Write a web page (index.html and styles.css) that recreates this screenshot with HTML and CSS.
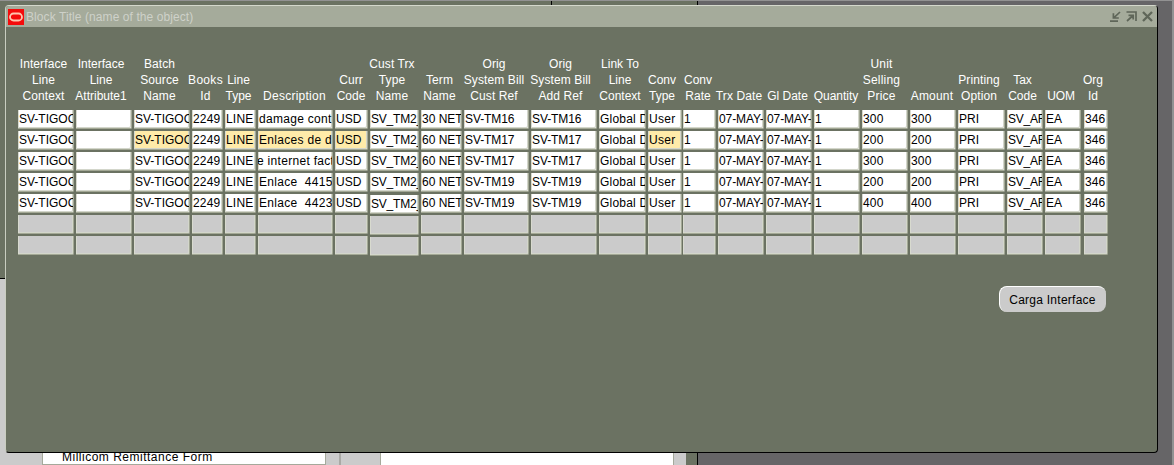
FILE: index.html
```html
<!DOCTYPE html>
<html lang="en">
<head>
<meta charset="utf-8">
<title>Block Title</title>
<link rel="stylesheet" href="styles.css">
</head>
<body>
<div class="desktop">
  <div class="parent-window"></div>
  <div class="parent-tick"></div>
  <div class="parent-body">
    <div class="list-item">Millicom Remittance Form</div>
    <div class="list-rule"></div>
    <div class="list-item blank"></div>
  </div>
  <main class="window">
    <header class="titlebar">
      <svg class="logo" width="16" height="16" viewBox="0 0 16 16"><rect width="16" height="16" fill="#f40b0b"/><rect x="2" y="4.500" width="12" height="7" rx="3.500" fill="none" stroke="#ffc4ae" stroke-width="1.800"/></svg>
      <span class="title">Block Title (name of the object)</span>
      <svg class="controls" width="44" height="12" viewBox="0 0 44 12" fill="none" stroke="#5f6659" stroke-width="1.700">
        <path d="M0 10.200H8M10 1L4 6.600M3.400 2.200V7H8.800"/>
        <path d="M16.500 1H26V10M17 10L23 4.500M18.500 4.300H23.200V8.500"/>
        <path d="M33 1L42 10M42 1L33 10" stroke-width="2.300"/>
      </svg>
    </header>
    <section class="grid" id="grid"></section>
    <div class="actions"><button class="button">Carga Interface</button></div>
  </main>
</div>
<script src="grid.js"></script>
</body>
</html>
```
FILE: styles.css
```css
* { box-sizing: border-box; }
body { margin: 0; font: 12px/16px "Liberation Sans", Arial, sans-serif; color: #000; }
.desktop { position: relative; width: 1174px; height: 465px; overflow: hidden; background: #666567; border-top: 1px solid #929292; border-right: 2px solid #929292; }
.parent-window { position: absolute; left: 0; top: 0; width: 698px; height: 465px; background: #6b7262; border-right: 1px solid #000; }
.parent-tick { position: absolute; left: 551px; top: 0; width: 1px; height: 5px; background: #000; }
.parent-body { position: absolute; left: 0; top: 277px; width: 686px; height: 188px; padding: 172px 0 0 42px; background: #cbcbcb; border-top: 1px solid #000; display: flex; }
.list-item { width: 284px; height: 14px; padding-left: 19px; line-height: 13px; background: #fff; border: solid #a5a99b; border-width: 0 1px 1px; letter-spacing: .5px; white-space: nowrap; }
.list-rule { width: 2px; height: 16px; margin: 0 39px 0 13px; background: #a9a9a5; }
.list-item.blank { width: 294px; height: 16px; padding: 0; }
.window { position: absolute; left: 5px; top: 4px; width: 1153px; height: 448px; background: #6b7262; border: 1px solid #000; border-top-color: #d4d8cc; border-left-color: #c9cdc0; border-radius: 4px; overflow: hidden; }
.titlebar { display: flex; height: 21px; padding: 3px 4px 0 2px; background: #a5ab9b; }
.logo { display: block; flex: none; }
.title { flex: 1; padding-left: 2px; color: #ced1c9; letter-spacing: .08px; line-height: 16px; }
.controls { margin-top: 2px; margin-right: -1px; }
.grid { display: flex; width: max-content; margin-left: 12px; padding-top: 28px; }
.column { display: flex; flex-direction: column; gap: 2px; }
.heading { height: 53px; display: flex; flex-direction: column; justify-content: flex-end; align-items: center; padding-bottom: 4px; color: #fff; white-space: pre; text-align: center; }
.field { height: 19px; padding-left: 1px; line-height: 18px; white-space: pre; overflow: hidden; background: #fff; border: solid #a3a895; border-width: 0 1px 1px 0; box-shadow: inset 1px 0 #d8dacf, inset -1px -1px #d3d6cb; border-radius: 0 0 2px 0; }
.field.current { background: #ffeba9; }
.field.empty { background: #cbcbcb; }
.field.scrolled { padding-left: 0; text-indent: -1px; }
.column.lowered .field:nth-child(n+6) { position: relative; top: 1px; }
.actions { display: flex; justify-content: flex-end; padding: 31px 51px 0 0; }
.button { width: 107px; height: 26px; padding: 0 1px 0 0; font: inherit; letter-spacing: .25px; background: #cbcbcb; border: solid #fff; border-width: 1px 0 0 1px; border-radius: 8px; }
```
FILE: grid.js
```js
// Each column: left edge, right edge, heading centre, heading, cell values,
// letter spacing of the cells, letter spacing of the heading.
const same = v => [v, v, v, v, v];
const columns = [
  [18, 74, 43.5, "Interface\nLine\nContext", same("SV-TIGOC"), 0, 0.1],
  [76, 132, 101, "Interface\nLine\nAttribute1", same(""), 0, 0],
  [134, 190, 159.5, "Batch\nSource\nName", same("SV-TIGOC"), 0, 0.1],
  [192, 223, 205.5, "Books\nId", same("2249"), 0.2, 0.3],
  [225, 256, 238.5, "Line\nType", same("LINE"), 0.2, 0],
  [258, 333, 294.5, "Description", ["damage cont", "Enlaces de d", "e internet fact", "Enlace  4415", "Enlace  4423"], 0.3, 0.25],
  [335, 368, 351, "Curr\nCode", same("USD"), 0, 0],
  [370, 419, 392, "Cust Trx\nType\nName", same("SV_TM2_"), -0.2, 0.1],
  [421, 462, 439.5, "Term\nName", ["30 NET", "60 NET", "60 NET", "60 NET", "60 NET"], 0, 0.1],
  [464, 529, 494, "Orig\nSystem Bill\nCust Ref", ["SV-TM16", "SV-TM17", "SV-TM17", "SV-TM19", "SV-TM19"], -0.1, 0.1],
  [531, 597, 560.5, "Orig\nSystem Bill\nAdd Ref", ["SV-TM16", "SV-TM17", "SV-TM17", "SV-TM19", "SV-TM19"], -0.1, 0.1],
  [599, 646, 620, "Link To\nLine\nContext", same("Global D"), 0.2, 0],
  [648, 682, 662, "Conv\nType", same("User"), 0.3, 0],
  [683, 716, 698, "Conv\nRate", same("1"), 0, 0],
  [718, 764, 739, "Trx Date", same("07-MAY-"), -0.1, 0.1],
  [766, 812, 787.5, "Gl Date", same("07-MAY-"), -0.1, 0],
  [814, 860, 836, "Quantity", same("1"), 0, 0],
  [862, 908, 881.5, "Unit\nSelling\nPrice", ["300", "200", "300", "200", "400"], 0.2, 0.2],
  [910, 956, 932, "Amount", ["300", "200", "300", "200", "400"], 0.2, 0.2],
  [958, 1005, 979, "Printing\nOption", same("PRI"), 0.1, 0.1],
  [1007, 1043, 1022.5, "Tax\nCode", same("SV_AF"), -0.25, 0],
  [1045, 1081, 1061, "UOM", same("EA"), 0, -0.1],
  [1084, 1108, 1093, "Org\nId", same("346"), 0.1, 0]
];
const highlighted = [2, 4, 5, 6, 12];
const grid = document.getElementById("grid");
let edge = 18;
columns.forEach(([left, right, centre, title, values, spacing, headSpacing], c) => {
  const column = document.createElement("div");
  column.className = "column" + (c === 7 ? " lowered" : "");
  column.style.width = right - left + "px";
  column.style.marginLeft = left - edge + "px";
  edge = right;
  const heading = document.createElement("div");
  heading.className = "heading";
  heading.textContent = title;
  heading.style.letterSpacing = headSpacing + "px";
  heading.style.transform = `translateX(${centre - (left + right) / 2}px)`;
  column.append(heading);
  for (let r = 0; r < 7; r++) {
    const field = document.createElement("div");
    field.className = "field";
    if (r > 4) field.classList.add("empty");
    if (r === 1 && highlighted.includes(c)) field.classList.add("current");
    if (r === 2 && c === 5) field.classList.add("scrolled");
    field.textContent = values[r] || "";
    field.style.letterSpacing = spacing + "px";
    column.append(field);
  }
  grid.append(column);
});
```
